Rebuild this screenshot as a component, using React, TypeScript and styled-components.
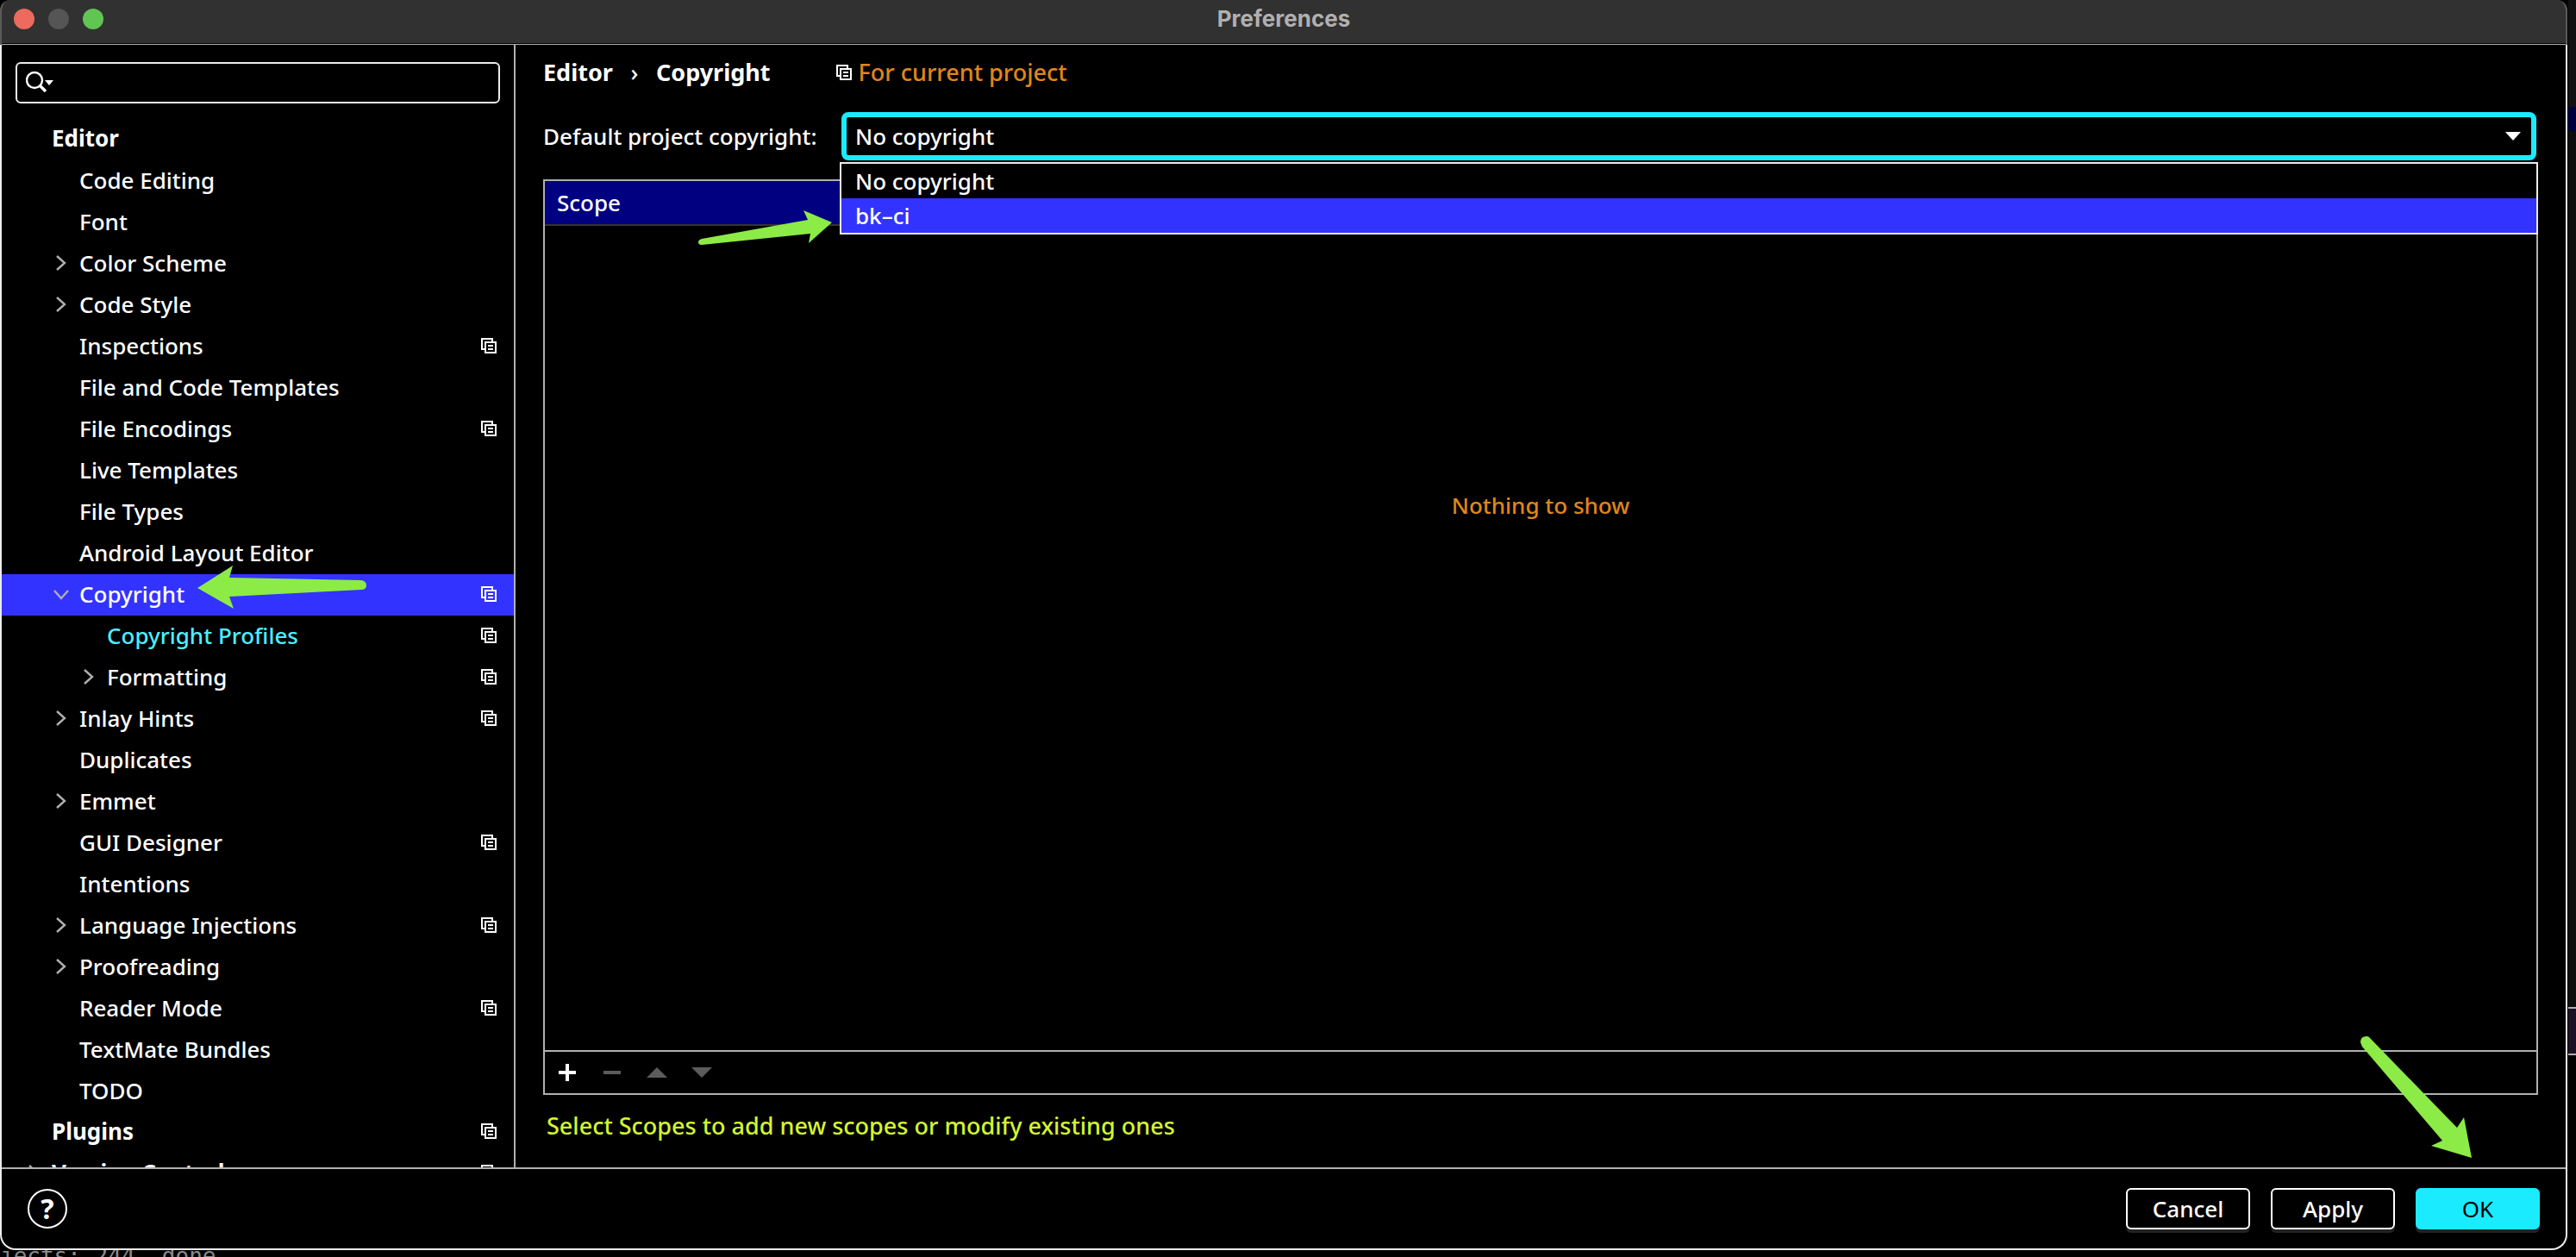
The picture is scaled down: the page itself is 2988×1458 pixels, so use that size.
import React, { useState } from "react";
import styled, { createGlobalStyle, css } from "styled-components";

const GlobalStyle = createGlobalStyle`
  *, *::before, *::after { box-sizing: border-box; }
  body { margin: 0; background: #000; overflow: hidden; }
  body, button, input, select {
    font-family: "Noto Sans", "Open Sans", sans-serif;
    font-size: 26px;
    line-height: 36px;
    font-weight: 500;
    color: #fff;
  }
`;

const LINE = "#b0b0b0";
const SELECTION = "#3333ff";
const CYAN = "#1aebff";
const GREEN = "#8ceb46";

const Desktop = styled.div`
  display: grid;
  grid-template-columns: minmax(0, 1fr) 10px;
  grid-template-rows: minmax(0, 1fr) 8px;
  height: 100vh;
  background: #000;
`;

const Dialog = styled.div`
  display: flex;
  flex-direction: column;
  min-height: 0;
`;

const TitleBar = styled.header`
  display: flex;
  align-items: center;
  flex: none;
  height: 52px;
  padding: 0 14px 8px;
  background: #313131;
  border: 2px solid #5a5a5a;
  border-width: 0 2px;
  border-radius: 12px 12px 0 0;
  box-shadow: inset 0 -1px ${LINE}, inset 0 -2px #000;
`;

const Frame = styled.div`
  display: flex;
  flex-direction: column;
  flex: 1;
  min-height: 0;
  background: #000;
  border: 2px solid #ececec;
  border-top: 0;
  border-radius: 0 0 18px 18px;
`;

const Lights = styled.div`
  display: flex;
  flex: 1;
  gap: 16px;
`;

const Light = styled.button<{ $color: string }>`
  width: 24px;
  height: 24px;
  padding: 0;
  border: 0;
  border-radius: 50%;
  background: ${(p) => p.$color};
`;

const Title = styled.h1`
  margin: 0;
  font-family: Inter, "Liberation Sans", sans-serif;
  font-size: 26px;
  line-height: 36px;
  font-weight: 700;
  color: #b0b0b0;
`;

const TitleSpacer = styled.div`
  flex: 1;
`;

const Body = styled.div`
  display: grid;
  grid-template-columns: 596px minmax(0, 1fr);
  flex: 1;
  min-height: 0;
`;

const Sidebar = styled.nav`
  display: flex;
  flex-direction: column;
  min-height: 0;
  padding-top: 20px;
  border-right: 2px solid ${LINE};
  overflow: hidden;
`;

const SearchBox = styled.label`
  display: flex;
  align-items: center;
  flex: none;
  height: 48px;
  margin: 0 16px 18px;
  padding: 0 10px;
  border: 2px solid #ececec;
  border-radius: 6px;
`;

const SearchInput = styled.input`
  flex: 1;
  min-width: 0;
  border: 0;
  outline: 0;
  padding: 0 8px;
  background: transparent;
`;

const Tree = styled.ul`
  flex: 1;
  min-height: 0;
  margin: 0;
  padding: 0;
  list-style: none;
  overflow: hidden;
`;

const TreeRow = styled.li<{ $selected?: boolean }>`
  position: relative;
  background: ${(p) => (p.$selected ? SELECTION : "transparent")};
`;

const TreeButton = styled.button<{ $level: number; $tone?: string }>`
  display: flex;
  align-items: center;
  width: 100%;
  height: 48px;
  padding: 0 20px ${(p) => (p.$level === 0 ? 4 : 2)}px ${(p) => 26 + p.$level * 32}px;
  border: 0;
  background: transparent;
  text-align: left;
  font-weight: ${(p) => (p.$level === 0 ? 700 : 500)};
  color: ${(p) => p.$tone ?? "#fff"};
`;

const Twisty = styled.span`
  display: flex;
  flex: none;
  width: 32px;
`;

const TreeLabel = styled.span`
  flex: 1;
`;

const Main = styled.main`
  display: flex;
  flex-direction: column;
  min-height: 0;
  padding: 12px 32px 30px;
`;

const Breadcrumb = styled.div`
  display: flex;
  align-items: center;
  height: 40px;
  font-size: 27px;
`;

const Crumb = styled.span`
  font-weight: 700;
`;

const CrumbSeparator = styled.span`
  width: 50px;
  text-align: center;
`;

const ProjectHint = styled.span`
  display: flex;
  align-items: center;
  gap: 8px;
  margin-left: 76px;
  color: #e0861a;
`;

const CopyrightField = styled.div`
  display: flex;
  align-items: center;
  margin: 26px 2px 22px 0;
`;

const FieldLabel = styled.label`
  flex: none;
  width: 346px;
`;

const SelectWrap = styled.div`
  position: relative;
  display: flex;
  align-items: center;
  flex: 1;
`;

const Select = styled.select`
  appearance: none;
  width: 100%;
  height: 56px;
  padding: 0 40px 0 10px;
  background: #000;
  border: 6px solid ${CYAN};
  border-radius: 8px;
  outline: 0;
`;

const SelectArrow = styled.svg`
  position: absolute;
  right: 18px;
  pointer-events: none;
`;

const Popup = styled.ul`
  position: absolute;
  z-index: 2;
  top: 58px;
  left: -2px;
  right: -2px;
  margin: 0;
  padding: 0;
  list-style: none;
  background: #000;
  border: 2px solid #ececec;
`;

const PopupItem = styled.li<{ $active?: boolean }>`
  height: 40px;
  padding: 2px 16px;
  background: ${(p) => (p.$active ? SELECTION : "#000")};
`;

const ScopePanel = styled.section`
  display: flex;
  flex-direction: column;
  flex: 1;
  min-height: 0;
  border: 2px solid ${LINE};
`;

const ScopeTable = styled.table`
  width: 100%;
  border-collapse: separate;
  border-spacing: 0;
`;

const ScopeHead = styled.th`
  height: 52px;
  padding: 0 14px;
  background: #000080;
  border-bottom: 2px solid #333;
  text-align: left;
  font-weight: 500;
`;

const EmptyArea = styled.div`
  display: flex;
  justify-content: center;
  flex: 1;
  padding-top: 306px;
  color: #e0861a;
`;

const Toolbar = styled.div`
  display: flex;
  align-items: center;
  gap: 28px;
  height: 50px;
  padding: 0 14px;
  border-top: 2px solid ${LINE};
`;

const ToolButton = styled.button`
  display: flex;
  width: 24px;
  height: 24px;
  padding: 0;
  border: 0;
  background: transparent;
`;

const ScopesLink = styled.a`
  align-self: flex-start;
  margin: 18px 4px 0;
  font-size: 27px;
  color: #d4f52e;
  text-decoration: none;
`;

const Footer = styled.footer`
  position: relative;
  display: flex;
  align-items: center;
  justify-content: flex-end;
  gap: 24px;
  flex: none;
  height: 94px;
  padding: 0 30px;
  border-top: 2px solid ${LINE};
`;

const HelpButton = styled.button`
  width: 46px;
  height: 46px;
  margin-right: auto;
  padding: 0;
  border: 2px solid #fff;
  border-radius: 50%;
  background: transparent;
  font-size: 32px;
  font-weight: 700;
`;

const primaryStyle = css`
  background: ${CYAN};
  border-color: ${CYAN};
  color: #000;
  font-weight: 400;
`;

const FooterButton = styled.button<{ $primary?: boolean }>`
  width: 144px;
  height: 48px;
  padding: 0;
  background: #000;
  border: 2px solid #fff;
  border-radius: 6px;
  box-shadow: 0 4px #222;
  ${(p) => p.$primary && primaryStyle}
`;

const Pointer = styled.svg<{ $x: string; $y: string }>`
  position: absolute;
  z-index: 3;
  left: ${(p) => p.$x};
  top: ${(p) => p.$y};
  fill: ${GREEN};
  pointer-events: none;
`;

const SideStrip = styled.aside`
  display: flex;
  flex-direction: column;
  margin-left: 1px;
  background: #111;
`;

const StripBlock = styled.div<{ $height?: number; $color: string; $outlined?: boolean }>`
  flex: ${(p) => (p.$height ? `0 0 ${p.$height}px` : "1")};
  background: ${(p) => p.$color};
  border: solid ${LINE};
  border-width: ${(p) => (p.$outlined ? "2px 0" : "0")};
`;

const Terminal = styled.div`
  grid-column: 1 / -1;
  overflow: hidden;
  font-family: "DejaVu Sans Mono", monospace;
  font-size: 26px;
  line-height: 14px;
  font-weight: 400;
  color: #8a8a8a;
  white-space: pre;
`;

const ProjectIcon = () => (
  <svg width="18" height="18" viewBox="0 0 18 18" fill="none" stroke="#fff" strokeWidth="2" aria-hidden="true">
    <path d="M4 13H1V1h12v3" />
    <path d="M5 5h12v12H5zM8 9h6M8 13h6" />
  </svg>
);

const Chevron = ({ open }: { open?: boolean }) => (
  <svg width="20" height="20" viewBox="0 0 20 20" fill="none" stroke={LINE} strokeWidth="2.4" aria-hidden="true">
    <path d={open ? "M3 6l8 9 8-9" : "M6 2l9 8-9 8"} />
  </svg>
);

type Node = {
  label: string;
  level: number;
  open?: boolean;
  closed?: boolean;
  project?: boolean;
  tone?: string;
};

const nodes: Node[] = [
  { label: "Editor", level: 0 },
  { label: "Code Editing", level: 1 },
  { label: "Font", level: 1 },
  { label: "Color Scheme", level: 1, closed: true },
  { label: "Code Style", level: 1, closed: true },
  { label: "Inspections", level: 1, project: true },
  { label: "File and Code Templates", level: 1 },
  { label: "File Encodings", level: 1, project: true },
  { label: "Live Templates", level: 1 },
  { label: "File Types", level: 1 },
  { label: "Android Layout Editor", level: 1 },
  { label: "Copyright", level: 1, open: true, project: true },
  { label: "Copyright Profiles", level: 2, project: true, tone: "#4deeff" },
  { label: "Formatting", level: 2, closed: true, project: true },
  { label: "Inlay Hints", level: 1, closed: true, project: true },
  { label: "Duplicates", level: 1 },
  { label: "Emmet", level: 1, closed: true },
  { label: "GUI Designer", level: 1, project: true },
  { label: "Intentions", level: 1 },
  { label: "Language Injections", level: 1, closed: true, project: true },
  { label: "Proofreading", level: 1, closed: true },
  { label: "Reader Mode", level: 1, project: true },
  { label: "TextMate Bundles", level: 1 },
  { label: "TODO", level: 1 },
  { label: "Plugins", level: 0, project: true },
  { label: "Version Control", level: 0, closed: true, project: true },
];

const choices = ["No copyright", "bk–ci"];

export default function App() {
  const [selected, setSelected] = useState("Copyright");
  const [choice, setChoice] = useState(choices[0]);

  return (
    <>
      <GlobalStyle />
      <Desktop>
        <Dialog role="dialog" aria-labelledby="title">
          <TitleBar>
            <Lights>
              <Light $color="#ec6a5e" aria-label="Close" />
              <Light $color="#555" aria-label="Minimize" disabled />
              <Light $color="#61c554" aria-label="Zoom" />
            </Lights>
            <Title id="title">Preferences</Title>
            <TitleSpacer />
          </TitleBar>
          <Frame>
            <Body>
              <Sidebar aria-label="Settings">
                <SearchBox>
                  <svg width="34" height="32" viewBox="0 0 34 32" fill="none" stroke="#fff" aria-hidden="true">
                    <circle cx="10" cy="13" r="9" strokeWidth="2.4" />
                    <path d="M16 19l7 7" strokeWidth="3.4" />
                    <path d="M22 13h10l-5 6z" fill="#fff" stroke="none" />
                  </svg>
                  <SearchInput type="text" aria-label="Search settings" />
                </SearchBox>
                <Tree>
                  {nodes.map((n) => (
                    <TreeRow key={n.label} $selected={selected === n.label}>
                      <TreeButton $level={n.level} $tone={n.tone} onClick={() => setSelected(n.label)}>
                        <Twisty>{(n.open || n.closed) && <Chevron open={n.open} />}</Twisty>
                        <TreeLabel>{n.label}</TreeLabel>
                        {n.project && <ProjectIcon />}
                      </TreeButton>
                      {n.label === "Copyright" && (
                        <Pointer $x="226px" $y="-12px" width="200" height="54" viewBox="0 0 200 54" aria-hidden="true">
                          <path d="M1 28L42 2l-4 14 153 3q6 1 6 6t-6 5L38 38l5 14z" />
                        </Pointer>
                      )}
                    </TreeRow>
                  ))}
                </Tree>
              </Sidebar>
              <Main>
                <Breadcrumb>
                  <Crumb>Editor</Crumb>
                  <CrumbSeparator>›</CrumbSeparator>
                  <Crumb>Copyright</Crumb>
                  <ProjectHint>
                    <ProjectIcon />
                    For current project
                  </ProjectHint>
                </Breadcrumb>
                <CopyrightField>
                  <FieldLabel htmlFor="copyright">Default project copyright:</FieldLabel>
                  <SelectWrap>
                    <Select id="copyright" value={choice} onChange={(e) => setChoice(e.target.value)}>
                      {choices.map((c) => (
                        <option key={c}>{c}</option>
                      ))}
                    </Select>
                    <SelectArrow width="18" height="10" viewBox="0 0 18 10" fill="#fff" aria-hidden="true">
                      <path d="M0 0h18L9 10z" />
                    </SelectArrow>
                    <Popup role="listbox" aria-label="Default project copyright">
                      {choices.map((c, i) => (
                        <PopupItem key={c} role="option" aria-selected={i === 1} $active={i === 1} onClick={() => setChoice(c)}>
                          {c}
                        </PopupItem>
                      ))}
                    </Popup>
                    <Pointer $x="-168px" $y="112px" width="160" height="44" viewBox="0 0 160 44" aria-hidden="true">
                      <path d="M157 16L124 2l5 11L6 35q-4 1-4 4t4 3l126-13-2 11z" />
                    </Pointer>
                  </SelectWrap>
                </CopyrightField>
                <ScopePanel>
                  <ScopeTable>
                    <thead>
                      <tr>
                        <ScopeHead scope="col">Scope</ScopeHead>
                      </tr>
                    </thead>
                  </ScopeTable>
                  <EmptyArea>Nothing to show</EmptyArea>
                  <Toolbar>
                    <ToolButton aria-label="Add">
                      <svg width="24" height="24" viewBox="0 0 24 24" stroke="#fff" strokeWidth="4">
                        <path d="M12 2v20M2 12h20" />
                      </svg>
                    </ToolButton>
                    <ToolButton aria-label="Remove" disabled>
                      <svg width="24" height="24" viewBox="0 0 24 24" stroke="#5c5c5c" strokeWidth="4">
                        <path d="M2 12h20" />
                      </svg>
                    </ToolButton>
                    <ToolButton aria-label="Move up" disabled>
                      <svg width="24" height="24" viewBox="0 0 24 24" fill="#5c5c5c">
                        <path d="M0 18h24L12 6z" />
                      </svg>
                    </ToolButton>
                    <ToolButton aria-label="Move down" disabled>
                      <svg width="24" height="24" viewBox="0 0 24 24" fill="#5c5c5c">
                        <path d="M0 6h24L12 18z" />
                      </svg>
                    </ToolButton>
                  </Toolbar>
                </ScopePanel>
                <ScopesLink href="#scopes">Select Scopes to add new scopes or modify existing ones</ScopesLink>
              </Main>
            </Body>
            <Footer>
              <HelpButton aria-label="Help">?</HelpButton>
              <FooterButton>Cancel</FooterButton>
              <FooterButton>Apply</FooterButton>
              <FooterButton $primary>OK</FooterButton>
              <Pointer $x="calc(100% - 240px)" $y="-157px" width="136" height="146" viewBox="0 0 136 146" aria-hidden="true">
                <path d="M9 3q-7 0-7 7l2 5 93 109-13 6 47 14-9-47-8 12L12 4q-1-1-3-1z" />
              </Pointer>
            </Footer>
          </Frame>
        </Dialog>
        <SideStrip>
          <StripBlock $height={124} $color="#111" />
          <StripBlock $height={28} $color="#000040" />
          <StripBlock $height={1016} $color="#0d0d0d" />
          <StripBlock $height={56} $color="#1c1226" $outlined />
          <StripBlock $color="#000" />
        </SideStrip>
        <Terminal>jects: 244, done</Terminal>
      </Desktop>
    </>
  );
}
